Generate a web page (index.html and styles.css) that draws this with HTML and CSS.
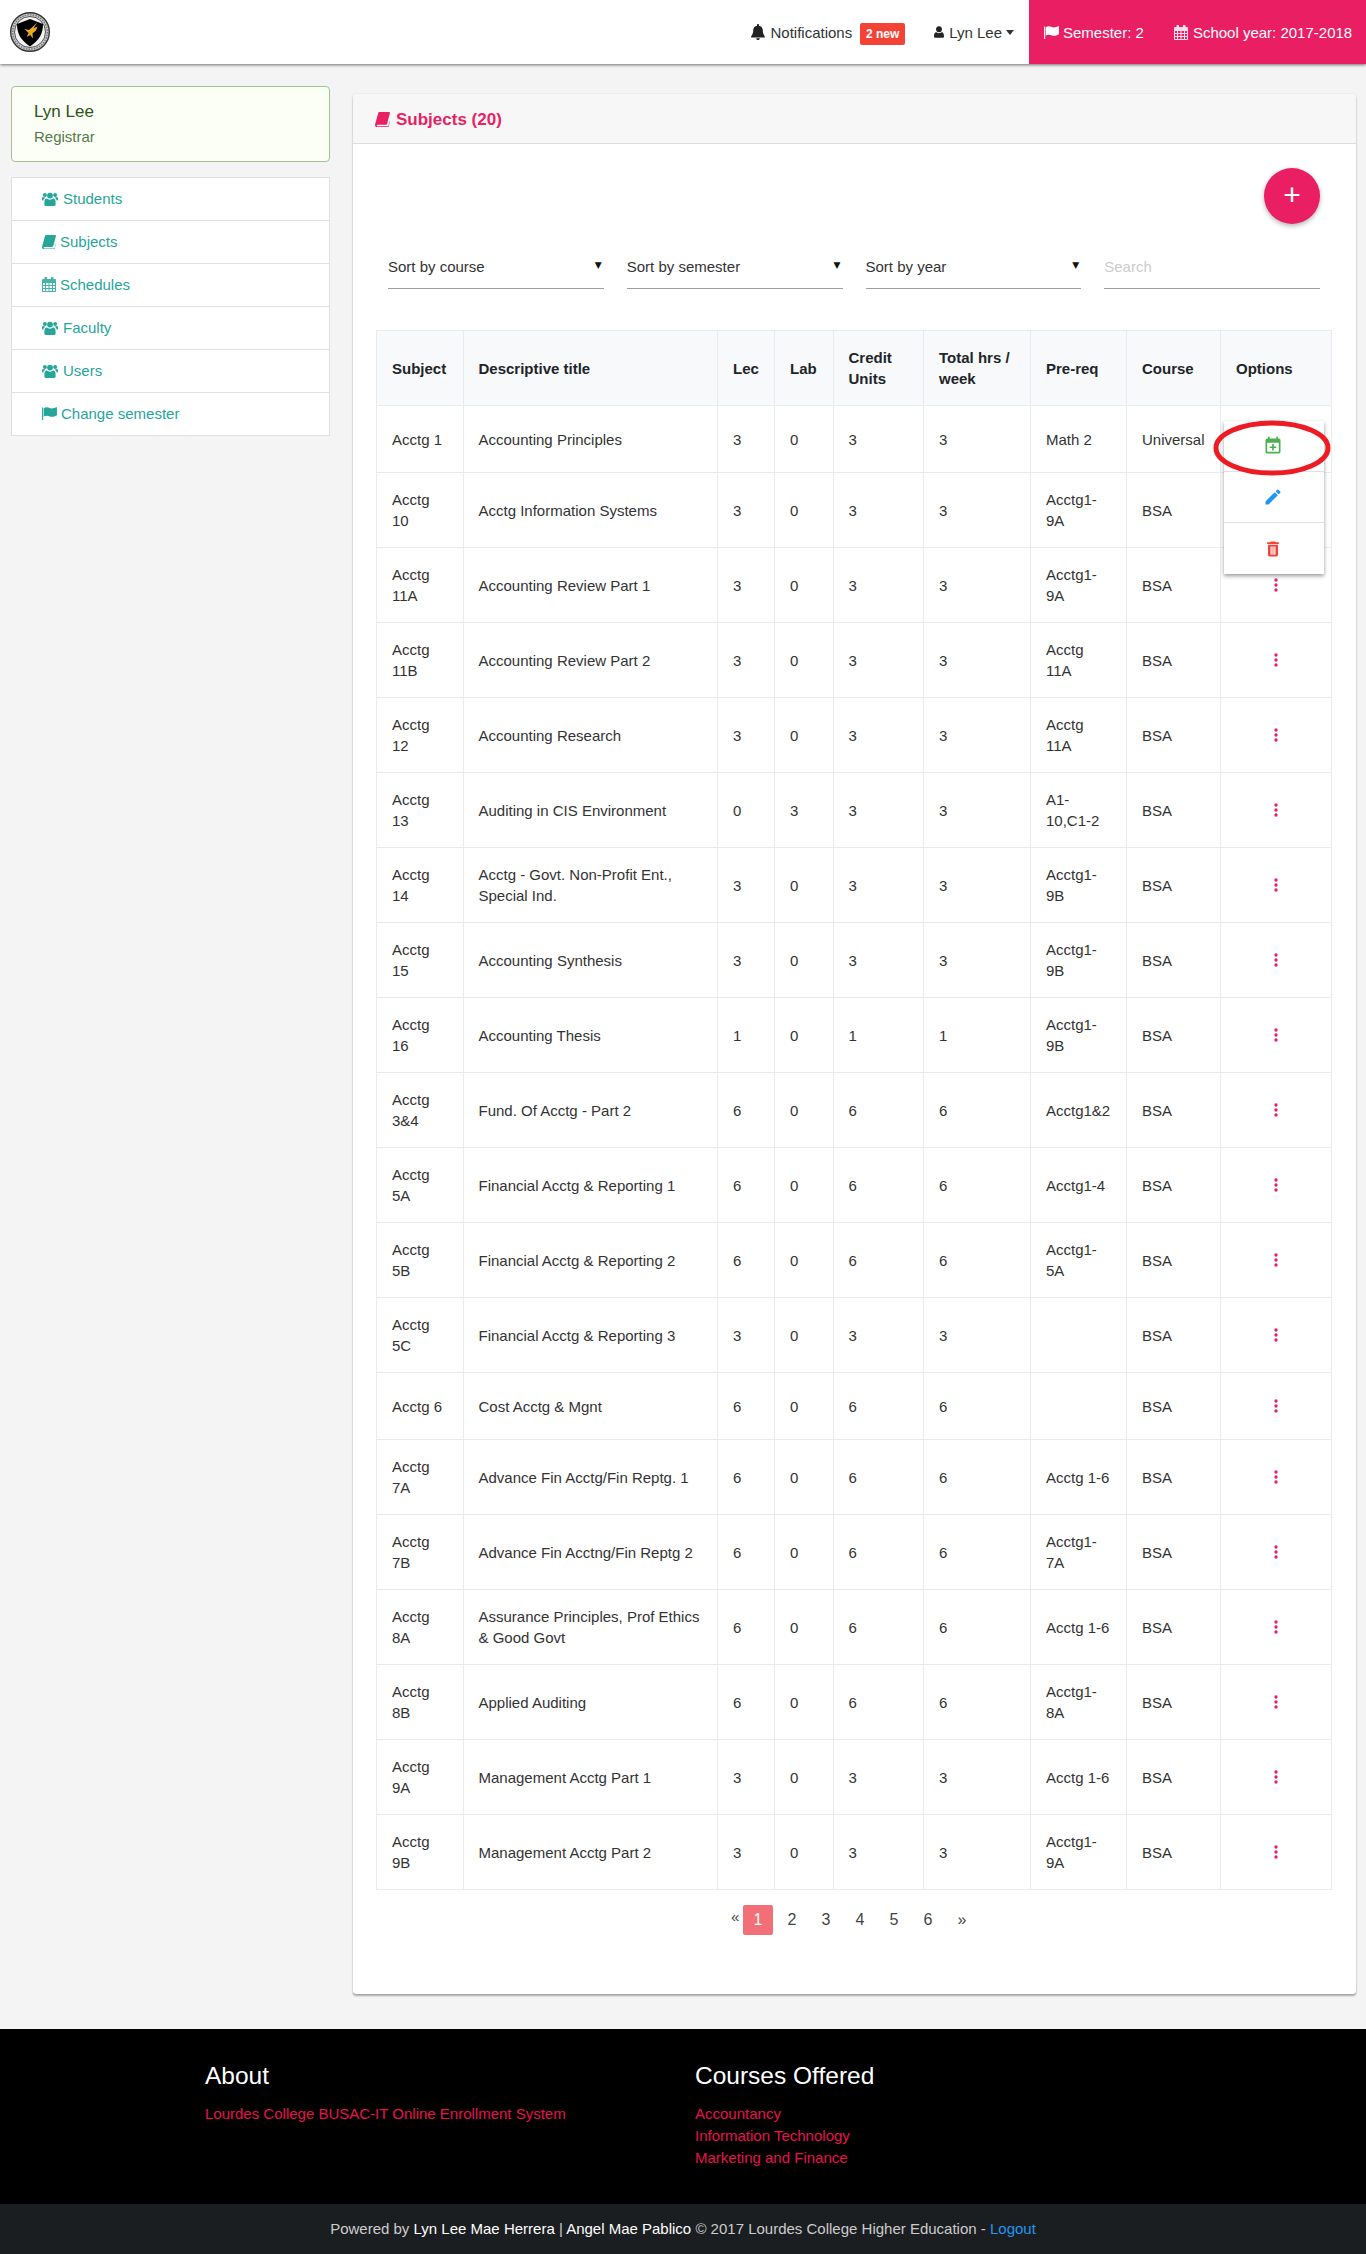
FILE: index.html
```html
<!DOCTYPE html>
<html lang="en">
<head>
<meta charset="utf-8">
<title>Subjects</title>
<link rel="stylesheet" href="styles.css">
</head>
<body>
<svg class="sprite" aria-hidden="true">
  <symbol id="i-users" viewBox="0 0 16 14"><circle cx="8" cy="3.6" r="2.9"/><circle cx="2.9" cy="3" r="2"/><circle cx="13.1" cy="3" r="2"/><path d="M3.7 14c-.8 0-1.3-.5-1.3-1.2V10c0-2 1-3.4 2.4-3.4.6 0 1.4 1.2 3.2 1.2s2.6-1.2 3.2-1.2c1.4 0 2.4 1.4 2.4 3.4v2.800c0 .7-.5 1.200-1.300 1.200z"/><path d="M0 8V6.500C0 5.500.6 5 1.200 5c.5 0 1 .4 1.600.400.3 0 .4.200.5.600-.9.400-1.700 1.100-2 2.500C.6 8.500 0 8.400 0 8zM16 8V6.500C16 5.500 15.400 5 14.800 5c-.5 0-1 .4-1.600.400-.3 0-.4.200-.5.600.9.400 1.700 1.100 2 2.500.7 0 1.300-.1 1.300-.5z"/></symbol>
  <symbol id="i-book" viewBox="0 0 14 14"><path d="M3.800 0h9.300c.7 0 1 .5.800 1.200L11.300 11c-.2.700-.7 1-1.400 1H2.400c-.6 0-.9.500-.7 1 .1.300.4.400.8.400h9.300c.3 0 .6-.2.700-.5l2.600-9.100c.1.300.1.600 0 .9l-2.500 9.300c-.1.500-.6.900-1.200.9H2.200C1.100 14.400.3 13.500.1 12.500c-.1-.3-.1-.7 0-1.100L3 1.100C3.200.4 3.500 0 3.800 0z"/></symbol>
  <symbol id="i-cal" viewBox="0 0 14 15"><path fill-rule="evenodd" d="M3 0h1.500c.3 0 .5.200.5.500V2h4V.5c0-.3.200-.5.500-.5H11c.3 0 .5.200.5.500V2H13c.6 0 1 .4 1 1v11c0 .6-.4 1-1 1H1c-.6 0-1-.4-1-1V3c0-.6.400-1 1-1h1.500V.5c0-.3.200-.5.500-.5zM1 6v2h2V6zm3 0v2h2.500V6zm3.500 0v2H10V6zM11 6v2h2V6zM1 9v2h2V9zm3 0v2h2.500V9zm3.500 0v2H10V9zM11 9v2h2V9zM1 12v2h2v-2zm3 0v2h2.500v-2zm3.500 0v2H10v-2zm3.500 0v2h2v-2z"/></symbol>
  <symbol id="i-flag" viewBox="0 0 16 14"><path d="M0 .5h1.200V14H0z"/><path d="M1.800 1.400C3 .6 4 .3 5.200.3c2 0 3 1.200 5.300 1.200 1.600 0 3.200-.8 4.700-1.300.4-.1.800 0 .8.400v8c0 .3-.2.500-.4.600-1.500.800-3.100 1.400-4.900 1.400-2.300 0-3.500-1.200-5.500-1.200-1.300 0-2.500.4-3.400.9z"/></symbol>
  <symbol id="i-bell" viewBox="0 0 14 16"><path d="M7 0c.6 0 1 .4 1 1v.7c2.300.4 3.800 2.200 3.800 4.600 0 4.300 2.200 5.500 2.200 7.200H0c0-1.700 2.200-2.900 2.200-7.200C2.200 3.900 3.700 2.100 6 1.700V1c0-.6.400-1 1-1zM5.200 14.200h3.600C8.800 15.200 8 16 7 16s-1.800-.8-1.800-1.800z"/></symbol>
  <symbol id="i-user" viewBox="0 0 12 14"><circle cx="6" cy="3.700" r="3.500"/><path d="M1.600 14C.7 14 0 13.400 0 12.400 0 9.800.7 7.200 2.800 7.200c.7 0 1.500 1.200 3.200 1.200s2.500-1.200 3.200-1.200c2.100 0 2.800 2.600 2.800 5.200 0 1-.7 1.600-1.600 1.600z"/></symbol>
  <symbol id="i-dots" viewBox="0 0 24 24"><path d="M12,16A2,2 0 0,1 14,18A2,2 0 0,1 12,20A2,2 0 0,1 10,18A2,2 0 0,1 12,16M12,10A2,2 0 0,1 14,12A2,2 0 0,1 12,14A2,2 0 0,1 10,12A2,2 0 0,1 12,10M12,4A2,2 0 0,1 14,6A2,2 0 0,1 12,8A2,2 0 0,1 10,6A2,2 0 0,1 12,4Z"/></symbol>
</svg>

<header class="nav">
  <a class="brand" href="#" aria-label="Lourdes College">
    <svg class="logo" viewBox="0 0 40 40">
      <circle cx="20" cy="20" r="19.300" fill="#c9c9c9" stroke="#333" stroke-width="1.400"/>
      <circle cx="20" cy="20" r="15.500" fill="#f2f2f2" stroke="#555" stroke-width="1"/>
      <circle cx="20" cy="20" r="17.300" fill="none" stroke="#777" stroke-width="1.500" stroke-dasharray="1.500 1.200"/>
      <path d="M20 7 33 12c0 9.500-3.500 16-13 22.500C10.500 28 7 21.500 7 12z" fill="#000"/>
      <path d="M27 10.500c-.8 2.500-2.600 3.500-3.200 5.700l3.600-1.600c-.5 3.300-2.400 5.600-4.900 6.600l.5 5.200-2.800-3.500-3.600 2.200 2-4.200-4.200-4 4.600 1c2-1.900 5.300-4.200 8-7.400z" fill="#e7ab17"/>
    </svg>
  </a>
  <div class="nav-right">
    <a class="nav-link nav-notif" href="#"><svg class="ico bell"><use href="#i-bell"/></svg>Notifications<span class="badge">2 new</span></a>
    <a class="nav-link nav-user" href="#"><svg class="ico uicon"><use href="#i-user"/></svg>Lyn Lee<span class="caret"></span></a>
    <div class="nav-term">
      <span class="term"><svg class="ico flag"><use href="#i-flag"/></svg>Semester: 2</span>
      <span class="term"><svg class="ico cal"><use href="#i-cal"/></svg>School year: 2017-2018</span>
    </div>
  </div>
</header>

<main class="main">
  <aside class="sidebar">
    <div class="profile">
      <div class="profile-name">Lyn Lee</div>
      <div class="profile-role">Registrar</div>
    </div>
    <ul class="side-list">
      <li><a href="#"><svg class="ico s-users"><use href="#i-users"/></svg>Students</a></li>
      <li><a href="#"><svg class="ico s-book"><use href="#i-book"/></svg>Subjects</a></li>
      <li><a href="#"><svg class="ico s-cal"><use href="#i-cal"/></svg>Schedules</a></li>
      <li><a href="#"><svg class="ico s-users"><use href="#i-users"/></svg>Faculty</a></li>
      <li><a href="#"><svg class="ico s-users"><use href="#i-users"/></svg>Users</a></li>
      <li><a href="#"><svg class="ico s-flag"><use href="#i-flag"/></svg>Change semester</a></li>
    </ul>
  </aside>

  <section class="panel">
    <h2 class="panel-head"><svg class="ico p-book"><use href="#i-book"/></svg>Subjects (20)</h2>
    <div class="panel-body">
      <div class="fab-row"><a class="fab" href="#">+</a></div>
      <div class="filters">
        <div class="select"><span>Sort by course</span><span class="arrow">▼</span></div>
        <div class="select"><span>Sort by semester</span><span class="arrow">▼</span></div>
        <div class="select"><span>Sort by year</span><span class="arrow">▼</span></div>
        <input class="search" type="text" placeholder="Search">
      </div>
      <table class="subjects">
        <colgroup><col class="c1"><col class="c2"><col class="c3"><col class="c4"><col class="c5"><col class="c6"><col class="c7"><col class="c8"><col class="c9"></colgroup>
        <thead>
          <tr><th>Subject</th><th>Descriptive title</th><th>Lec</th><th>Lab</th><th>Credit Units</th><th>Total hrs / week</th><th>Pre-req</th><th>Course</th><th>Options</th></tr>
        </thead>
        <tbody>
          <tr><td>Acctg 1</td><td>Accounting Principles</td><td>3</td><td>0</td><td>3</td><td>3</td><td>Math 2</td><td>Universal</td>
            <td class="opt-open">
              <a class="dots" href="#"><svg><use href="#i-dots"/></svg></a>
              <div class="menu">
                <a class="menu-item" href="#"><svg class="m-green" viewBox="0 0 24 24"><path d="M19,19V8H5V19H19M16,1H18V3H19A2,2 0 0,1 21,5V19C21,20.110 20.100,21 19,21H5C3.890,21 3,20.100 3,19V5C3,3.890 3.900,3 5,3H6V1H8V3H16V1M11,9.500H13V12.500H16V14.500H13V17.500H11V14.500H8V12.500H11V9.500Z"/></svg></a>
                <a class="menu-item" href="#"><svg class="m-blue" viewBox="0 0 24 24"><path d="M20.710,7.040C21.100,6.650 21.100,6 20.710,5.630L18.370,3.290C18,2.900 17.350,2.900 16.960,3.290L15.120,5.120L18.870,8.870M3,17.250V21H6.750L17.810,9.930L14.060,6.180L3,17.250Z"/></svg></a>
                <a class="menu-item" href="#"><svg class="m-red" viewBox="0 0 24 24"><path fill-rule="evenodd" d="M19,4H15.500L14.500,3H9.500L8.500,4H5V6H19M6,19A2,2 0 0,0 8,21H16A2,2 0 0,0 18,19V7H6V19ZM9,9H10.500V19H9ZM11.250,9H12.750V19H11.250ZM13.500,9H15V19H13.500Z"/></svg></a>
              </div>
              <svg class="ring" viewBox="0 0 120 56"><ellipse cx="59" cy="28" rx="56" ry="25"/></svg>
            </td></tr>
          <tr><td>Acctg 10</td><td>Acctg Information Systems</td><td>3</td><td>0</td><td>3</td><td>3</td><td>Acctg1-9A</td><td>BSA</td><td><a class="dots" href="#"><svg><use href="#i-dots"/></svg></a></td></tr>
          <tr><td>Acctg 11A</td><td>Accounting Review Part 1</td><td>3</td><td>0</td><td>3</td><td>3</td><td>Acctg1-9A</td><td>BSA</td><td><a class="dots" href="#"><svg><use href="#i-dots"/></svg></a></td></tr>
          <tr><td>Acctg 11B</td><td>Accounting Review Part 2</td><td>3</td><td>0</td><td>3</td><td>3</td><td>Acctg 11A</td><td>BSA</td><td><a class="dots" href="#"><svg><use href="#i-dots"/></svg></a></td></tr>
          <tr><td>Acctg 12</td><td>Accounting Research</td><td>3</td><td>0</td><td>3</td><td>3</td><td>Acctg 11A</td><td>BSA</td><td><a class="dots" href="#"><svg><use href="#i-dots"/></svg></a></td></tr>
          <tr><td>Acctg 13</td><td>Auditing in CIS Environment</td><td>0</td><td>3</td><td>3</td><td>3</td><td>A1-10,C1-2</td><td>BSA</td><td><a class="dots" href="#"><svg><use href="#i-dots"/></svg></a></td></tr>
          <tr><td>Acctg 14</td><td>Acctg - Govt. Non-Profit Ent., Special Ind.</td><td>3</td><td>0</td><td>3</td><td>3</td><td>Acctg1-9B</td><td>BSA</td><td><a class="dots" href="#"><svg><use href="#i-dots"/></svg></a></td></tr>
          <tr><td>Acctg 15</td><td>Accounting Synthesis</td><td>3</td><td>0</td><td>3</td><td>3</td><td>Acctg1-9B</td><td>BSA</td><td><a class="dots" href="#"><svg><use href="#i-dots"/></svg></a></td></tr>
          <tr><td>Acctg 16</td><td>Accounting Thesis</td><td>1</td><td>0</td><td>1</td><td>1</td><td>Acctg1-9B</td><td>BSA</td><td><a class="dots" href="#"><svg><use href="#i-dots"/></svg></a></td></tr>
          <tr><td>Acctg 3&amp;4</td><td>Fund. Of Acctg - Part 2</td><td>6</td><td>0</td><td>6</td><td>6</td><td>Acctg1&amp;2</td><td>BSA</td><td><a class="dots" href="#"><svg><use href="#i-dots"/></svg></a></td></tr>
          <tr><td>Acctg 5A</td><td>Financial Acctg &amp; Reporting 1</td><td>6</td><td>0</td><td>6</td><td>6</td><td>Acctg1-4</td><td>BSA</td><td><a class="dots" href="#"><svg><use href="#i-dots"/></svg></a></td></tr>
          <tr><td>Acctg 5B</td><td>Financial Acctg &amp; Reporting 2</td><td>6</td><td>0</td><td>6</td><td>6</td><td>Acctg1-5A</td><td>BSA</td><td><a class="dots" href="#"><svg><use href="#i-dots"/></svg></a></td></tr>
          <tr><td>Acctg 5C</td><td>Financial Acctg &amp; Reporting 3</td><td>3</td><td>0</td><td>3</td><td>3</td><td></td><td>BSA</td><td><a class="dots" href="#"><svg><use href="#i-dots"/></svg></a></td></tr>
          <tr><td>Acctg 6</td><td>Cost Acctg &amp; Mgnt</td><td>6</td><td>0</td><td>6</td><td>6</td><td></td><td>BSA</td><td><a class="dots" href="#"><svg><use href="#i-dots"/></svg></a></td></tr>
          <tr><td>Acctg 7A</td><td>Advance Fin Acctg/Fin Reptg. 1</td><td>6</td><td>0</td><td>6</td><td>6</td><td>Acctg 1-6</td><td>BSA</td><td><a class="dots" href="#"><svg><use href="#i-dots"/></svg></a></td></tr>
          <tr><td>Acctg 7B</td><td>Advance Fin Acctng/Fin Reptg 2</td><td>6</td><td>0</td><td>6</td><td>6</td><td>Acctg1-7A</td><td>BSA</td><td><a class="dots" href="#"><svg><use href="#i-dots"/></svg></a></td></tr>
          <tr><td>Acctg 8A</td><td>Assurance Principles, Prof Ethics &amp; Good Govt</td><td>6</td><td>0</td><td>6</td><td>6</td><td>Acctg 1-6</td><td>BSA</td><td><a class="dots" href="#"><svg><use href="#i-dots"/></svg></a></td></tr>
          <tr><td>Acctg 8B</td><td>Applied Auditing</td><td>6</td><td>0</td><td>6</td><td>6</td><td>Acctg1-8A</td><td>BSA</td><td><a class="dots" href="#"><svg><use href="#i-dots"/></svg></a></td></tr>
          <tr><td>Acctg 9A</td><td>Management Acctg Part 1</td><td>3</td><td>0</td><td>3</td><td>3</td><td>Acctg 1-6</td><td>BSA</td><td><a class="dots" href="#"><svg><use href="#i-dots"/></svg></a></td></tr>
          <tr><td>Acctg 9B</td><td>Management Acctg Part 2</td><td>3</td><td>0</td><td>3</td><td>3</td><td>Acctg1-9A</td><td>BSA</td><td><a class="dots" href="#"><svg><use href="#i-dots"/></svg></a></td></tr>
        </tbody>
      </table>
      <nav class="pager">
        <a class="pg-prev" href="#">«</a>
        <a class="pg active" href="#">1</a>
        <a class="pg" href="#">2</a>
        <a class="pg" href="#">3</a>
        <a class="pg" href="#">4</a>
        <a class="pg" href="#">5</a>
        <a class="pg" href="#">6</a>
        <a class="pg" href="#">»</a>
      </nav>
    </div>
  </section>
</main>

<footer class="footer">
  <div class="foot-top">
    <div class="foot-col foot-about">
      <h4>About</h4>
      <a href="#">Lourdes College BUSAC-IT Online Enrollment System</a>
    </div>
    <div class="foot-col">
      <h4>Courses Offered</h4>
      <a href="#">Accountancy</a>
      <a href="#">Information Technology</a>
      <a href="#">Marketing and Finance</a>
    </div>
  </div>
  <div class="foot-bottom">Powered by <b>Lyn Lee Mae Herrera</b> | <b>Angel Mae Pablico</b> © 2017 Lourdes College Higher Education - <a href="#">Logout</a></div>
</footer>
</body>
</html>
```
FILE: styles.css
```css
* { box-sizing: border-box; }
html, body { margin: 0; padding: 0; }
body {
  background: #f4f4f4;
  color: #212529;
  font-family: "Liberation Sans", Arial, sans-serif;
  font-size: 15px;
  line-height: 21px;
}
a { color: inherit; text-decoration: none; }
.sprite { display: none; }
.ico { fill: currentColor; flex: none; display: inline-block; }

/* top bar */
.nav {
  display: flex;
  justify-content: space-between;
  height: 64px;
  background: #fff;
  box-shadow: 0 1px 3px rgba(0, 0, 0, .55);
  position: relative;
}
.brand { display: flex; align-items: center; padding-left: 10px; }
.logo { width: 40px; height: 40px; display: block; }
.nav-right { display: flex; align-items: stretch; }
.nav-link { display: flex; align-items: center; color: #333; }
.nav-notif { margin-right: 29px; }
.bell { width: 14px; height: 16px; margin-right: 5px; color: #222; }
.badge {
  background: #f44336;
  color: #fff;
  font-size: 12px;
  font-weight: 700;
  line-height: 22px;
  height: 22px;
  width: 45px;
  text-align: center;
  border-radius: 2px;
  margin-left: 8px;
  margin-top: 3px;
}
.uicon { width: 10px; height: 12px; margin-right: 5px; color: #222; }
.nav-user { margin-right: 15px; }
.caret {
  width: 0;
  height: 0;
  margin-left: 4px;
  border: 4.5px solid transparent;
  border-top: 5px solid #333;
  border-bottom: 0;
}
.nav-term {
  display: flex;
  gap: 30px;
  width: 337px;
  background: #e91e63;
  color: #fff;
  padding-left: 15px;
}
.term { display: flex; align-items: center; }
.flag { width: 15px; height: 13px; margin-right: 4px; }
.cal { width: 14px; height: 15px; margin-right: 5px; color: #fde; }

/* page body */
.main {
  display: flex;
  align-items: flex-start;
  gap: 23px;
  padding: 22px 10.500px 35px 11px;
}
.sidebar { width: 319px; flex: none; }
.profile {
  height: 76px;
  padding: 13px 22px;
  background: #fcfff5;
  border: 1px solid #a3c293;
  border-radius: 4px;
  color: #2c662d;
}
.profile-name { font-size: 17px; line-height: 24px; color: #2f5218; }
.profile-role { line-height: 21px; margin-top: 2px; color: #54794b; }
.side-list {
  list-style: none;
  margin: 15px 0 0;
  padding: 0;
  background: #fff;
  border: 1px solid #e0e0e0;
  border-bottom: 0;
}
.side-list li { border-bottom: 1px solid #e0e0e0; height: 43px; }
.side-list a {
  display: flex;
  align-items: center;
  height: 42px;
  padding: 0 0 1px 30px;
  color: #26a69a;
}
.s-users { width: 16px; height: 14px; margin-right: 5px; }
.s-book { width: 14px; height: 14px; margin-right: 4px; }
.s-cal { width: 14px; height: 15px; margin-right: 4px; opacity: .85; }
.s-flag { width: 15px; height: 13px; margin-right: 4px; }

.panel {
  flex: 1;
  min-width: 0;
  margin-top: 8px;
  background: #fff;
  border-radius: 3px;
  box-shadow: 0 2px 2px rgba(0, 0, 0, .3), 0 0 1px rgba(0, 0, 0, .3);
}
.panel-head {
  display: flex;
  align-items: center;
  height: 50px;
  margin: 0;
  padding: 1px 22px 0;
  background: #f7f7f7;
  border-bottom: 1px solid #ddd;
  border-radius: 3px 3px 0 0;
  color: #e91e63;
  font-size: 17px;
  font-weight: 700;
}
.p-book { width: 15px; height: 15px; margin-right: 6px; }
.panel-body { padding: 24px 23.500px 59px 23px; }
.fab-row { display: flex; justify-content: flex-end; padding-right: 12px; }
.fab {
  width: 56px;
  height: 56px;
  border-radius: 50%;
  background: #e91e63;
  color: #fff;
  font-size: 30px;
  font-weight: 300;
  line-height: 54px;
  text-align: center;
  box-shadow: 0 2px 5px rgba(0, 0, 0, .3);
}
.filters {
  display: grid;
  grid-template-columns: repeat(4, 1fr);
  gap: 23px;
  margin: 21px 12px 41px;
}
.select, .search {
  display: flex;
  justify-content: space-between;
  align-items: center;
  height: 44px;
  border: 0;
  border-bottom: 1px solid #9e9e9e;
  padding: 0 2px 0 0;
  font: 15px/21px "Liberation Sans", Arial, sans-serif;
  color: #333;
  background: transparent;
}
.arrow { font-size: 9px; color: #111; margin-top: -2px; font-family: "DejaVu Sans", sans-serif; }
.search { width: 100%; outline: 0; }
.search::placeholder { color: #ccc; opacity: 1; }

/* table */
.subjects {
  width: 955px;
  table-layout: fixed;
  border-collapse: collapse;
  border: 1px solid #d6d6d6;
}
.c1 { width: 86.500px; }
.c2 { width: 254.500px; }
.c3 { width: 57px; }
.c4 { width: 58.500px; }
.c5 { width: 90.500px; }
.c6 { width: 107px; }
.c7 { width: 96px; }
.c8 { width: 94px; }
.c9 { width: 111px; }
.subjects th, .subjects td {
  padding: 16px 15px;
  border: 1px solid #e9ecef;
  text-align: left;
  vertical-align: middle;
  font-size: 15px;
  line-height: 21px;
}
.subjects th { background: #f8f9fa; color: #212529; font-weight: 700; }
.subjects td { color: #333; }
.opt-open { position: relative; }
.dots { display: block; height: 34px; text-align: center; padding-top: 7px; }
.dots svg { width: 20px; height: 20px; fill: #e91e63; display: inline-block; vertical-align: top; }
.menu {
  position: absolute;
  top: 15px;
  left: 3px;
  width: 100px;
  background: #fff;
  box-shadow: 0 2px 4px rgba(0, 0, 0, .4);
}
.menu-item {
  display: flex;
  justify-content: center;
  align-items: center;
  height: 51px;
  border-bottom: 1px solid #e0e0e0;
  padding-right: 3px;
}
.menu-item:last-child { border-bottom: 0; }
.menu-item svg { width: 20px; height: 20px; }
.m-green { fill: #4caf50; }
.m-blue { fill: #2196f3; }
.m-red { fill: #f44336; }
.ring {
  position: absolute;
  top: 14px;
  left: -8px;
  width: 120px;
  height: 56px;
  fill: none;
  stroke: #ed1c24;
  stroke-width: 5;
  pointer-events: none;
}

/* pagination */
.pager {
  display: flex;
  justify-content: center;
  gap: 4px;
  margin-top: 15px;
  color: #444;
  font-size: 16px;
  line-height: 30px;
}
.pg { width: 30px; height: 30px; text-align: center; border-radius: 2px; }
.pg.active { background: #f36f77; color: #fff; }
.pg-prev { width: 8px; line-height: 24px; font-size: 15px; text-align: center; }

/* footer */
.footer { background: #000; }
.foot-top { display: flex; height: 175px; padding: 32px 0 0 205px; }
.foot-col a { display: block; color: #e8124f; line-height: 22px; }
.foot-col h4 { margin: 0 0 13px; color: #fff; font-size: 24.500px; font-weight: 400; line-height: 29px; }
.foot-about { width: 490px; }
.foot-bottom {
  height: 50px;
  background: #1b1e21;
  color: #ccc;
  text-align: center;
  line-height: 50px;
}
.foot-bottom b { color: #fff; font-weight: 400; }
.foot-bottom a { color: #2196f3; }
```
